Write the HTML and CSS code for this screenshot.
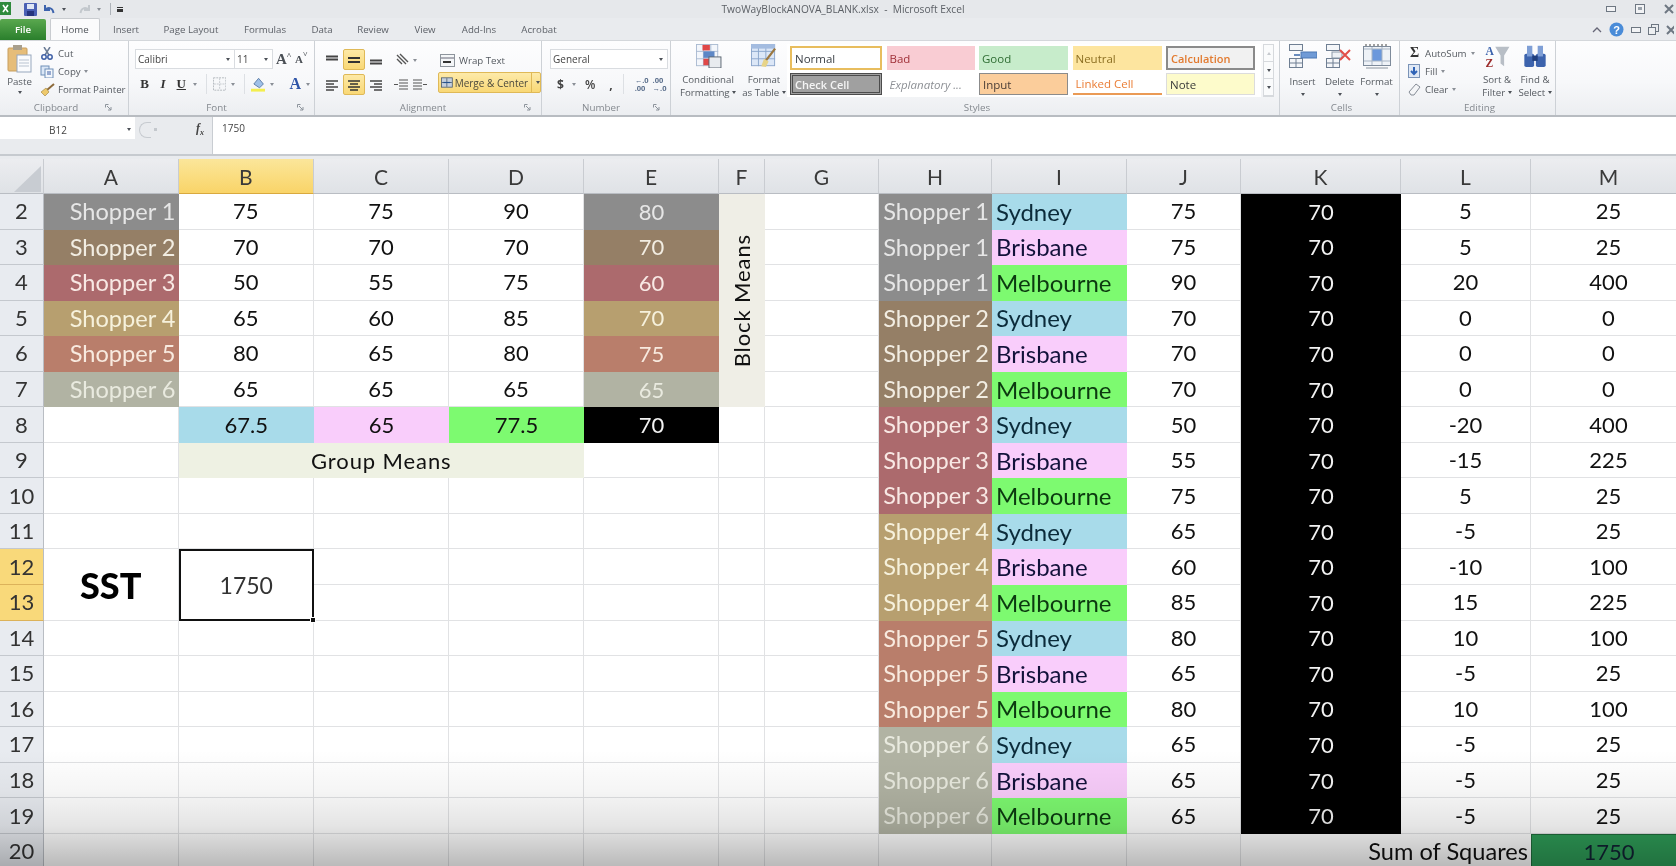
FILE: index.html
```html
<!DOCTYPE html>
<html lang="en">
<head>
<meta charset="utf-8">
<title>TwoWayBlockANOVA_BLANK.xlsx - Microsoft Excel</title>
<link rel="stylesheet" href="styles.css">
</head>
<body>
<div class="app">
  <header class="titlebar">
    <div class="qat">
      <svg class="ic" width="12" height="14" viewBox="0 0 12 14"><rect width="11" height="13" y="0" fill="#2f8a3c"/><path d="M3 3l5 7M8 3l-5 7" stroke="#fff" stroke-width="1.6"/></svg>
      <svg class="ic save" width="13" height="13" viewBox="0 0 13 13"><rect width="13" height="13" rx="1" fill="#4a60b4"/><rect x="3" y="1" width="7" height="5" fill="#dfe6f5"/><rect x="3" y="8" width="7" height="5" fill="#26357e"/></svg>
      <svg class="ic" width="13" height="13" viewBox="0 0 13 13"><path d="M2 2v5h5M2.5 7c2-3 7-3 8 3" fill="none" stroke="#3c63ad" stroke-width="2"/></svg>
      <span class="tiny-arrow dark"></span>
      <svg class="ic redo" width="13" height="13" viewBox="0 0 13 13"><path d="M11 2v5H6M10.500 7c-2-3-7-3-8 3" fill="none" stroke="#c3c8cd" stroke-width="2"/></svg>
      <span class="tiny-arrow"></span>
      <span class="qat-sep"></span>
      <span class="qat-more"></span>
    </div>
    <div class="doc-title">TwoWayBlockANOVA_BLANK.xlsx  -  Microsoft Excel</div>
    <div class="winctl">
      <svg width="10" height="6" viewBox="0 0 10 6"><rect x=".5" y=".5" width="9" height="5" fill="#f2f3f5" stroke="#6e7782"/></svg>
      <svg width="10" height="10" viewBox="0 0 10 10"><rect x=".5" y=".5" width="9" height="9" fill="#f2f3f5" stroke="#6e7782"/><rect x="3" y="3" width="4" height="3" fill="#9aa2ab"/></svg>
      <svg width="10" height="10" viewBox="0 0 10 10"><path d="M1 1l8 8M9 1l-8 8" stroke="#6e7782" stroke-width="2"/></svg>
    </div>
  </header>

  <nav class="tabs">
    <div class="tab-file">File</div>
    <div class="tab tab-home">Home</div>
    <div class="tab w-insert">Insert</div>
    <div class="tab w-layout">Page Layout</div>
    <div class="tab w-formulas">Formulas</div>
    <div class="tab w-data">Data</div>
    <div class="tab w-review">Review</div>
    <div class="tab w-view">View</div>
    <div class="tab w-addins">Add-Ins</div>
    <div class="tab w-acrobat">Acrobat</div>
    <div class="tab-tools">
      <svg width="10" height="8" viewBox="0 0 10 8"><path d="M1 6l4-4 4 4" fill="none" stroke="#667" stroke-width="1.300"/></svg>
      <svg width="15" height="15" viewBox="0 0 15 15"><circle cx="7.500" cy="7.500" r="7" fill="#4a8cd8"/><text x="7.500" y="11.500" text-anchor="middle" class="help">?</text></svg>
      <svg width="10" height="6" viewBox="0 0 10 6"><rect x=".5" y=".5" width="9" height="5" fill="#f2f3f5" stroke="#6e7782"/></svg>
      <svg width="11" height="11" viewBox="0 0 11 11"><rect x="3.500" y=".5" width="7" height="7" fill="none" stroke="#6e7782"/><rect x=".5" y="3.500" width="7" height="7" fill="#eef0f2" stroke="#6e7782"/></svg>
      <svg width="8" height="10" viewBox="0 0 8 10"><path d="M1 1l8 8M9 1l-8 8" stroke="#6e7782" stroke-width="2"/></svg>
    </div>
  </nav>

  <section class="ribbon">
    <div class="group g-clip">
      <div class="body clip-body">
        <div class="big paste">
          <svg width="25" height="28" viewBox="0 0 25 28"><rect x="1" y="3" width="19" height="23" rx="1" fill="#e6bd79" stroke="#c79e5f"/><rect x="6" y="0" width="9" height="5" fill="#a89f8d"/><rect x="10" y="10" width="14" height="17" fill="#fafbfd" stroke="#97a7bd"/><path d="M12 15h10M12 18h10M12 21h10" stroke="#b9c3d0"/></svg>
          <span>Paste</span><span class="tiny-arrow dark"></span>
        </div>
        <div class="small-stack">
          <div class="small"><svg width="12" height="13" viewBox="0 0 12 13"><path d="M3 0l5 8M9 0L4 8" stroke="#6b7c96" stroke-width="1.500"/><circle cx="3" cy="10" r="2.200" fill="none" stroke="#3d5ea5" stroke-width="1.500"/><circle cx="9" cy="10" r="2.200" fill="none" stroke="#3d5ea5" stroke-width="1.500"/></svg><span>Cut</span></div>
          <div class="small"><svg width="14" height="13" viewBox="0 0 14 13"><rect x="1" y="1" width="8" height="9" fill="#dbe7f6" stroke="#6f8fb8"/><rect x="5" y="4" width="8" height="9" fill="#f3f7fc" stroke="#6f8fb8"/><path d="M7 7h4M7 9h4" stroke="#3d5ea5"/></svg><span>Copy</span><span class="tiny-arrow"></span></div>
          <div class="small"><svg width="16" height="13" viewBox="0 0 16 13"><path d="M15 1L8 7" stroke="#8d6a3a" stroke-width="2"/><path d="M2 9l5-4 3 4-4 4z" fill="#eec96b" stroke="#9a7d3c" stroke-width=".6"/></svg><span>Format Painter</span></div>
        </div>
      </div>
      <div class="label"><i></i><span>Clipboard</span><svg class="launch" width="7" height="7" viewBox="0 0 7 7"><path d="M.5 .5h3M.5 .5v3M2 2l4 4M6 3v3H3" fill="none" stroke="#8d949c"/></svg></div>
    </div>

    <div class="group g-font">
      <div class="body col">
        <div class="combo-row">
          <div class="combo font-name"><span>Calibri</span><span class="tiny-arrow dark"></span></div>
          <div class="combo font-size"><span>11</span><span class="tiny-arrow dark"></span></div>
          <span class="grow">A<sup>˄</sup></span><span class="grow shrink">A<sup>˅</sup></span>
        </div>
        <div class="tool-row font-tools">
          <b class="bt serif">B</b><i class="bt serif">I</i><u class="bt serif">U</u><span class="tiny-arrow"></span>
          <span class="vsep"></span>
          <svg width="14" height="14" viewBox="0 0 14 14"><rect x=".5" y=".5" width="13" height="13" fill="none" stroke="#b2b7bd" stroke-dasharray="2 1"/><path d="M7 1v12M1 7h12" stroke="#c3c7cc" stroke-dasharray="2 1"/></svg><span class="tiny-arrow"></span>
          <span class="vsep"></span>
          <svg width="15" height="16" viewBox="0 0 15 16"><path d="M3 8l5-6 5 6-4 4z" fill="#9fc0e8" stroke="#5e7ea8"/><rect y="13" width="15" height="3" fill="#f3ee4f"/></svg><span class="tiny-arrow"></span>
          <span class="font-a">A</span><span class="tiny-arrow"></span>
        </div>
      </div>
      <div class="label"><i></i><span>Font</span><svg class="launch" width="7" height="7" viewBox="0 0 7 7"><path d="M.5 .5h3M.5 .5v3M2 2l4 4M6 3v3H3" fill="none" stroke="#8d949c"/></svg></div>
    </div>

    <div class="group g-align">
      <div class="body align-body">
        <div class="align-grid">
          <span class="abtn"><svg width="14" height="10" viewBox="0 0 14 10"><path d="M1 1.500h12M1 4.500h12" stroke="#444" stroke-width="2"/></svg></span>
          <span class="abtn on"><svg width="14" height="10" viewBox="0 0 14 10"><path d="M1 3h12M1 7h12" stroke="#333" stroke-width="2"/></svg></span>
          <span class="abtn"><svg width="14" height="10" viewBox="0 0 14 10"><path d="M1 5.500h12M1 8.500h12" stroke="#444" stroke-width="2"/></svg></span>
          <span class="abtn"><svg width="14" height="12" viewBox="0 0 14 12"><path d="M1 2h12M1 5h8M1 8h12M1 11h8" stroke="#444" stroke-width="1.500"/></svg></span>
          <span class="abtn on"><svg width="14" height="12" viewBox="0 0 14 12"><path d="M1 2h12M3 5h8M1 8h12M3 11h8" stroke="#333" stroke-width="1.500"/></svg></span>
          <span class="abtn"><svg width="14" height="12" viewBox="0 0 14 12"><path d="M1 2h12M5 5h8M1 8h12M5 11h8" stroke="#444" stroke-width="1.500"/></svg></span>
        </div>
        <div class="orient">
          <div class="orient-top"><svg width="15" height="14" viewBox="0 0 15 14"><path d="M2 2l9 9M5 1l8 8M2 6l5 5" stroke="#555" stroke-width="1.400"/></svg><span class="tiny-arrow"></span></div>
          <div class="orient-bot">
            <svg width="14" height="13" viewBox="0 0 14 13"><path d="M5 1h9M5 4h9M5 7h9M5 10h9M0 5.500h4" stroke="#555" stroke-width="1.200"/></svg>
            <svg width="14" height="13" viewBox="0 0 14 13"><path d="M0 1h9M0 4h9M0 7h9M0 10h9M10 5.500h4" stroke="#555" stroke-width="1.200"/></svg>
          </div>
        </div>
        <div class="wrapcol">
          <div class="wrap"><svg width="17" height="15" viewBox="0 0 17 15"><rect x=".5" y="1.500" width="14" height="12" fill="#f4f6f8" stroke="#8d949c"/><path d="M1 5h13" stroke="#667"/><path d="M3 9h8" stroke="#333" stroke-width="2"/></svg><span>Wrap Text</span></div>
          <div class="merge"><svg width="15" height="13" viewBox="0 0 15 13"><rect x=".5" y=".5" width="14" height="12" fill="#c4cfdd" stroke="#44566c"/><path d="M7.500 1v11M1 6.500h13" stroke="#44566c"/><path d="M3 6.500h9" stroke="#24528f" stroke-width="1.500"/></svg><span>Merge &amp; Center</span><em></em><span class="tiny-arrow dark"></span></div>
        </div>
      </div>
      <div class="label"><i></i><span>Alignment</span><svg class="launch" width="7" height="7" viewBox="0 0 7 7"><path d="M.5 .5h3M.5 .5v3M2 2l4 4M6 3v3H3" fill="none" stroke="#8d949c"/></svg></div>
    </div>

    <div class="group g-num">
      <div class="body col num-body">
        <div class="combo num-name"><span>General</span><span class="tiny-arrow dark"></span></div>
        <div class="tool-row num-tools">
          <b>$</b><span class="tiny-arrow"></span><span class="pct">%</span><b class="comma">,</b>
          <span class="vsep"></span>
          <span class="dec">←.0<br>.00</span><span class="dec">.00<br>→.0</span>
        </div>
      </div>
      <div class="label"><i></i><span>Number</span><svg class="launch" width="7" height="7" viewBox="0 0 7 7"><path d="M.5 .5h3M.5 .5v3M2 2l4 4M6 3v3H3" fill="none" stroke="#8d949c"/></svg></div>
    </div>

    <div class="group g-styles">
      <div class="body styles-body">
        <div class="big cf">
          <svg width="27" height="26" viewBox="0 0 27 26"><rect x=".5" y=".5" width="23" height="23" fill="#f3f6fb" stroke="#a9bad1"/><path d="M8 0v24M16 0v24M0 8h24M0 16h24" stroke="#a9bad1"/><rect x="7" y="1" width="8" height="6" fill="#e04848"/><rect x="8" y="8" width="12" height="7" fill="#5d87c6"/><rect x="8" y="16" width="7" height="7" fill="#e04848"/><rect x="14" y="14" width="13" height="12" fill="#e8ebef" stroke="#55606d"/></svg>
          <span>Conditional<br>Formatting <a class="tiny-arrow dark"></a></span>
        </div>
        <div class="big ft">
          <svg width="28" height="26" viewBox="0 0 28 26"><rect x=".5" y=".5" width="25" height="23" fill="#dce7f7" stroke="#8aa5cb"/><path d="M8 0v24M16 0v24M0 8h26M0 16h26" stroke="#8aa5cb"/><rect y="0" width="26" height="5" fill="#a4bce0"/><path d="M26 5L16 18" stroke="#9c7840" stroke-width="2.500"/><path d="M11 24l3-8 5 3-3 6z" fill="#e7d489"/></svg>
          <span>Format<br>as Table <a class="tiny-arrow dark"></a></span>
        </div>
        <div class="gallery">
          <div class="st st-normal">Normal</div><div class="st st-bad">Bad</div><div class="st st-good">Good</div><div class="st st-neutral">Neutral</div><div class="st st-calc">Calculation</div>
          <div class="st st-check"><span>Check Cell</span></div><div class="st st-expl">Explanatory ...</div><div class="st st-input">Input</div><div class="st st-linked">Linked Cell</div><div class="st st-note">Note</div>
        </div>
        <div class="gal-scroll"><span><i class="up"></i></span><span><i class="tiny-arrow dark"></i></span><span><i class="tiny-arrow dark"></i></span></div>
      </div>
      <div class="label"><i></i><span>Styles</span><i></i></div>
    </div>

    <div class="group g-cells">
      <div class="body cells-body">
        <div class="big cellbtn">
          <svg width="28" height="24" viewBox="0 0 28 24"><rect x=".5" y=".5" width="13" height="6" fill="#f4f6f9" stroke="#6f7f93"/><rect x=".5" y="14.500" width="13" height="9" fill="#f4f6f9" stroke="#6f7f93"/><path d="M7 15v9M1 19h13" stroke="#6f7f93"/><rect x="12" y="8" width="16" height="6" fill="#6f9ad6" stroke="#4d78b4"/><path d="M5 11h6" stroke="#3a68a8" stroke-width="1.500"/></svg>
          <span>Insert</span><span class="tiny-arrow dark"></span>
        </div>
        <div class="big cellbtn">
          <svg width="28" height="24" viewBox="0 0 28 24"><rect x=".5" y=".5" width="13" height="6" fill="#f4f6f9" stroke="#6f7f93"/><rect x=".5" y="14.500" width="13" height="9" fill="#f4f6f9" stroke="#6f7f93"/><path d="M7 15v9M1 19h13" stroke="#6f7f93"/><rect x="6" y="8" width="10" height="6" fill="#eef1f5" stroke="#8b98a8"/><path d="M14 6l10 10M24 6L14 16" stroke="#e2504a" stroke-width="2"/></svg>
          <span>Delete</span><span class="tiny-arrow dark"></span>
        </div>
        <div class="big cellbtn">
          <svg width="28" height="26" viewBox="0 0 28 26"><rect x=".5" y="2.500" width="27" height="19" fill="#eef2f7" stroke="#7e8b9b"/><rect x="9" y="5" width="10" height="12" fill="#6b98dc"/><path d="M9 3v18M19 3v18M1 17h26M1 5h26" stroke="#a8b5c5"/><path d="M3 24h22" stroke="#8a949f"/><path d="M2 1h24" stroke="#444" stroke-dasharray="2 2"/></svg>
          <span class="fmt-label">Format</span><span class="tiny-arrow dark"></span>
        </div>
      </div>
      <div class="label"><i></i><span>Cells</span><i></i></div>
    </div>

    <div class="group g-edit">
      <div class="body edit-body">
        <div class="small-stack edit-stack">
          <div class="small"><span class="sigma">Σ</span><span>AutoSum</span><span class="tiny-arrow"></span></div>
          <div class="small"><svg class="eic" width="13" height="14" viewBox="0 0 13 14"><rect x=".5" y=".5" width="11" height="13" fill="#dfe8f5" stroke="#7a93b7"/><path d="M6 3v6M3 7l3 3 3-3" fill="none" stroke="#2f63b7" stroke-width="2"/></svg><span>Fill</span><span class="tiny-arrow"></span></div>
          <div class="small"><svg class="eic" width="13" height="13" viewBox="0 0 13 13"><path d="M1 9l7-8 4 3-6 8H3z" fill="#f4f5f7" stroke="#858c96"/></svg><span>Clear</span><span class="tiny-arrow"></span></div>
        </div>
        <div class="big sortbtn">
          <svg width="28" height="27" viewBox="0 0 28 27"><path d="M12 3h16l-6 10v12l-4-3V13z" fill="#b8bec6"/><text x="1" y="12" class="az az-a">A</text><text x="1" y="26" class="az az-z">Z</text></svg>
          <span>Sort &amp;<br>Filter <a class="tiny-arrow dark"></a></span>
        </div>
        <div class="big sortbtn">
          <svg width="26" height="27" viewBox="0 0 26 27"><rect x="1" y="11" width="11" height="15" rx="2" fill="#3c63ad"/><rect x="14" y="11" width="11" height="15" rx="2" fill="#3c63ad"/><rect x="4" y="2" width="6" height="12" fill="#7f9fd6"/><rect x="16" y="2" width="6" height="12" fill="#7f9fd6"/><rect x="10" y="13" width="6" height="6" fill="#203f7d"/></svg>
          <span>Find &amp;<br>Select <a class="tiny-arrow dark"></a></span>
        </div>
      </div>
      <div class="label"><i></i><span>Editing</span><i></i></div>
    </div>
  </section>

  <section class="fbar">
    <div class="fbar-left">
      <div class="name-row">
        <div class="namebox"><span>B12</span><span class="tiny-arrow dark"></span></div>
        <div class="fbar-dots"><span></span><i></i></div>
        <div class="fx">f<sub>x</sub></div>
      </div>
    </div>
    <div class="fbar-input">1750</div>
  </section>

  <main class="sheet">
    <div class="h corner"><svg width="28" height="26" viewBox="0 0 28 26"><path d="M27 0v26H0z" fill="#c8ccd2"/></svg></div>
    <div class="h">A</div><div class="h sel">B</div><div class="h">C</div><div class="h">D</div><div class="h">E</div><div class="h">F</div><div class="h">G</div><div class="h">H</div><div class="h">I</div><div class="h">J</div><div class="h">K</div><div class="h">L</div><div class="h">M</div>

    <div class="r">2</div><div class="c sh s1">Shopper 1</div><div class="c">75</div><div class="c">75</div><div class="c">90</div><div class="c s1">80</div><div class="c block"><span>Block Means</span></div><div class="c"></div><div class="c sh s1">Shopper 1</div><div class="c city blue">Sydney</div><div class="c">75</div><div class="c k">70</div><div class="c">5</div><div class="c">25</div>
    <div class="r">3</div><div class="c sh s2">Shopper 2</div><div class="c">70</div><div class="c">70</div><div class="c">70</div><div class="c s2">70</div><div class="c"></div><div class="c sh s1">Shopper 1</div><div class="c city pink">Brisbane</div><div class="c">75</div><div class="c k">70</div><div class="c">5</div><div class="c">25</div>
    <div class="r">4</div><div class="c sh s3">Shopper 3</div><div class="c">50</div><div class="c">55</div><div class="c">75</div><div class="c s3">60</div><div class="c"></div><div class="c sh s1">Shopper 1</div><div class="c city green">Melbourne</div><div class="c">90</div><div class="c k">70</div><div class="c">20</div><div class="c">400</div>
    <div class="r">5</div><div class="c sh s4">Shopper 4</div><div class="c">65</div><div class="c">60</div><div class="c">85</div><div class="c s4">70</div><div class="c"></div><div class="c sh s2">Shopper 2</div><div class="c city blue">Sydney</div><div class="c">70</div><div class="c k">70</div><div class="c">0</div><div class="c">0</div>
    <div class="r">6</div><div class="c sh s5">Shopper 5</div><div class="c">80</div><div class="c">65</div><div class="c">80</div><div class="c s5">75</div><div class="c"></div><div class="c sh s2">Shopper 2</div><div class="c city pink">Brisbane</div><div class="c">70</div><div class="c k">70</div><div class="c">0</div><div class="c">0</div>
    <div class="r">7</div><div class="c sh s6">Shopper 6</div><div class="c">65</div><div class="c">65</div><div class="c">65</div><div class="c s6">65</div><div class="c"></div><div class="c sh s2">Shopper 2</div><div class="c city green">Melbourne</div><div class="c">70</div><div class="c k">70</div><div class="c">0</div><div class="c">0</div>
    <div class="r">8</div><div class="c"></div><div class="c blue">67.5</div><div class="c pink">65</div><div class="c green">77.5</div><div class="c k">70</div><div class="c"></div><div class="c"></div><div class="c sh s3">Shopper 3</div><div class="c city blue">Sydney</div><div class="c">50</div><div class="c k">70</div><div class="c">-20</div><div class="c">400</div>
    <div class="r">9</div><div class="c"></div><div class="c gm">Group Means</div><div class="c"></div><div class="c"></div><div class="c"></div><div class="c sh s3">Shopper 3</div><div class="c city pink">Brisbane</div><div class="c">55</div><div class="c k">70</div><div class="c">-15</div><div class="c">225</div>
    <div class="r">10</div><div class="c"></div><div class="c"></div><div class="c"></div><div class="c"></div><div class="c"></div><div class="c"></div><div class="c"></div><div class="c sh s3">Shopper 3</div><div class="c city green">Melbourne</div><div class="c">75</div><div class="c k">70</div><div class="c">5</div><div class="c">25</div>
    <div class="r">11</div><div class="c"></div><div class="c"></div><div class="c"></div><div class="c"></div><div class="c"></div><div class="c"></div><div class="c"></div><div class="c sh s4">Shopper 4</div><div class="c city blue">Sydney</div><div class="c">65</div><div class="c k">70</div><div class="c">-5</div><div class="c">25</div>
    <div class="r rsel">12</div><div class="c sst">SST</div><div class="c total">1750<i class="handle"></i></div><div class="c"></div><div class="c"></div><div class="c"></div><div class="c"></div><div class="c"></div><div class="c sh s4">Shopper 4</div><div class="c city pink">Brisbane</div><div class="c">60</div><div class="c k">70</div><div class="c">-10</div><div class="c">100</div>
    <div class="r rsel">13</div><div class="c"></div><div class="c"></div><div class="c"></div><div class="c"></div><div class="c"></div><div class="c sh s4">Shopper 4</div><div class="c city green">Melbourne</div><div class="c">85</div><div class="c k">70</div><div class="c">15</div><div class="c">225</div>
    <div class="r">14</div><div class="c"></div><div class="c"></div><div class="c"></div><div class="c"></div><div class="c"></div><div class="c"></div><div class="c"></div><div class="c sh s5">Shopper 5</div><div class="c city blue">Sydney</div><div class="c">80</div><div class="c k">70</div><div class="c">10</div><div class="c">100</div>
    <div class="r">15</div><div class="c"></div><div class="c"></div><div class="c"></div><div class="c"></div><div class="c"></div><div class="c"></div><div class="c"></div><div class="c sh s5">Shopper 5</div><div class="c city pink">Brisbane</div><div class="c">65</div><div class="c k">70</div><div class="c">-5</div><div class="c">25</div>
    <div class="r">16</div><div class="c"></div><div class="c"></div><div class="c"></div><div class="c"></div><div class="c"></div><div class="c"></div><div class="c"></div><div class="c sh s5">Shopper 5</div><div class="c city green">Melbourne</div><div class="c">80</div><div class="c k">70</div><div class="c">10</div><div class="c">100</div>
    <div class="r">17</div><div class="c"></div><div class="c"></div><div class="c"></div><div class="c"></div><div class="c"></div><div class="c"></div><div class="c"></div><div class="c sh s6">Shopper 6</div><div class="c city blue">Sydney</div><div class="c">65</div><div class="c k">70</div><div class="c">-5</div><div class="c">25</div>
    <div class="r">18</div><div class="c"></div><div class="c"></div><div class="c"></div><div class="c"></div><div class="c"></div><div class="c"></div><div class="c"></div><div class="c sh s6">Shopper 6</div><div class="c city pink">Brisbane</div><div class="c">65</div><div class="c k">70</div><div class="c">-5</div><div class="c">25</div>
    <div class="r">19</div><div class="c"></div><div class="c"></div><div class="c"></div><div class="c"></div><div class="c"></div><div class="c"></div><div class="c"></div><div class="c sh s6">Shopper 6</div><div class="c city green">Melbourne</div><div class="c">65</div><div class="c k">70</div><div class="c">-5</div><div class="c">25</div>
    <div class="r">20</div><div class="c"></div><div class="c"></div><div class="c"></div><div class="c"></div><div class="c"></div><div class="c"></div><div class="c"></div><div class="c"></div><div class="c"></div><div class="c"></div><div class="c sumlabel">Sum of Squares</div><div class="c sum">1750</div>
  </main>
  <div class="video-shade"></div>
</div>
</body>
</html>
```

FILE: styles.css
```css
* { box-sizing: border-box; }
html, body { margin: 0; height: 100%; overflow: hidden; }
body { background: #fff; font-family: "Open Sans", "Liberation Sans", sans-serif; color: #444; }
.app { position: relative; width: 1676px; height: 866px; overflow: hidden; display: flex; flex-direction: column; filter: blur(.45px); background: #e9ebee; }

/* shared bits */
.tiny-arrow { display: inline-block; width: 0; height: 0; border-left: 2.500px solid transparent; border-right: 2.500px solid transparent; border-top: 3px solid #8a8f96; vertical-align: middle; flex: none; }
.tiny-arrow.dark { border-top-color: #4d5158; }
.vsep { width: 1px; height: 20px; background: #dde0e4; flex: none; }

/* title bar */
.titlebar { height: 18px; display: grid; grid-template-columns: 1fr auto 1fr; align-items: center; background: #e6e8eb; flex: none; }
.qat { display: flex; align-items: center; gap: 6px; overflow: hidden; }
.qat .save { margin-left: 6px; }
.qat .redo { margin-left: 6px; }
.qat-sep { width: 1px; height: 12px; background: #aeb3b9; margin-left: 3px; }
.qat-more { width: 6px; height: 5px; border-top: 1px solid #333; border-bottom: 3px solid #333; }
.doc-title { font-size: 10.200px; color: #5c6066; white-space: pre; padding-left: 10px; }
.winctl { display: flex; justify-content: flex-end; align-items: center; gap: 19px; padding-right: 2px; }

/* tabs */
.tabs { height: 22px; display: flex; align-items: flex-end; background: #e9ebee; flex: none; font-size: 9.700px; }
.tab-file { width: 46px; height: 21px; background: linear-gradient(#5aa84f, #2a7f2c); color: #fff; font-weight: 600; display: flex; align-items: center; justify-content: center; border-radius: 2px 2px 0 0; }
.tab { height: 21px; display: flex; align-items: center; justify-content: center; color: #5d6168; flex: none; }
.tab-home { width: 50px; margin-left: 4px; background: #fbfbfc; border: 1px solid #c9ccd0; border-bottom: none; color: #50545a; border-radius: 2px 2px 0 0; height: 22px; }
.w-insert { width: 52px; }
.w-layout { width: 78px; }
.w-formulas { width: 70px; }
.w-data { width: 44px; }
.w-review { width: 58px; }
.w-view { width: 46px; }
.w-addins { width: 62px; }
.w-acrobat { width: 58px; }
.tab-tools { margin-left: auto; height: 21px; display: flex; align-items: center; gap: 7px; overflow: hidden; width: 84px; }

/* ribbon */
.ribbon { height: 75px; display: flex; flex: none; background: linear-gradient(#fdfdfe 0, #f7f8fa 55%, #eceef1 100%); font-size: 9.700px; color: #555a60; border-top: 1px solid #d4d7db; }
.group { display: flex; flex-direction: column; border-right: 1px solid #cdd1d6; flex: none; }
.body { flex: 1; display: flex; min-height: 0; }
.col { flex-direction: column; }
.label { height: 16px; display: grid; grid-template-columns: 1fr auto 1fr; align-items: center; font-size: 9.800px; color: #84898f; flex: none; padding-right: 4px; }
.launch { justify-self: end; }
.g-clip { width: 129px; } .g-font { width: 186px; } .g-align { width: 227px; } .g-num { width: 129px; } .g-styles { width: 609px; } .g-cells { width: 120px; } .g-edit { width: 156px; }
.g-clip .label { padding-right: 16px; }
.g-font .label, .g-align .label, .g-num .label { padding-right: 10px; }
.g-styles .label, .g-cells .label, .g-edit .label { padding-left: 8px; }

.big { display: flex; flex-direction: column; align-items: center; line-height: 12.500px; text-align: center; flex: none; }
.big a { display: inline-block; }
.clip-body { padding: 3px 0 0 6px; gap: 6px; }
.paste { width: 27px; gap: 2px; padding-top: 1px; }
.paste svg { margin-bottom: 1px; }
.small-stack { display: flex; flex-direction: column; gap: 0; }
.small { height: 19.500px; display: flex; align-items: center; gap: 3px; white-space: nowrap; }
.small svg { width: 16px; flex: none; }

/* font group */
.g-font .col { padding: 8px 0 0 6px; }
.combo-row { display: flex; align-items: center; height: 20px; }
.combo { height: 20px; background: #fff; border: 1px solid #d9dce0; display: flex; align-items: center; justify-content: space-between; padding: 0 4px 0 2px; color: #444; font-size: 10px; }
.font-name { width: 100px; }
.font-size { width: 38px; border-left: none; }
.grow { font: 700 15px "Liberation Serif", serif; color: #4a4f55; margin-left: 3px; width: 16px; }
.grow sup { font-size: 8px; vertical-align: 6px; line-height: 0; }
.shrink { font-size: 11px; margin-left: 3px; }
.tool-row { display: flex; align-items: center; height: 22px; }
.font-tools { margin-top: 4px; padding-left: 3px; gap: 5px; }
.bt { width: 14px; text-align: center; font-size: 13px; color: #333; }
.serif { font-family: "Liberation Serif", serif; font-weight: 700; }
.font-tools .tiny-arrow { margin-right: 4px; }
.font-tools svg { margin-left: 1px; }
.font-a { font: 700 16px "Liberation Serif", serif; color: #2f55a8; margin-left: 6px; }

/* alignment */
.align-body { padding: 8px 0 0 6px; }
.align-grid { display: grid; grid-template-columns: repeat(3, 22px); grid-auto-rows: 22px; row-gap: 3px; width: 66px; }
.abtn { display: flex; align-items: center; justify-content: center; border-radius: 2px; height: 21px; }
.abtn.on { background: linear-gradient(#fde9a6, #f9d876); border: 1px solid #dfb957; }
.orient { width: 46px; margin-left: 7px; }
.orient-top { height: 22px; display: flex; align-items: center; gap: 3px; padding-left: 1px; }
.orient-bot { margin-top: 3px; height: 22px; display: flex; align-items: center; gap: 5px; }
.wrapcol { margin-left: 11px; width: 105px; }
.wrap { height: 22px; display: flex; align-items: center; gap: 2px; padding-left: 2px; white-space: nowrap; }
.merge { margin-top: 1px; height: 21px; display: flex; align-items: center; gap: 2px; background: linear-gradient(#fdeaa9, #f9d876); border: 1px solid #dfb957; border-radius: 2px; padding-left: 2px; white-space: nowrap; color: #4c4a3d; font-size: 10px; width: 103px; }
.merge em { width: 1px; height: 19px; background: #dfb957; margin-left: 1px; }
.merge .tiny-arrow { margin-left: 2px; }

/* number */
.num-body { padding: 8px 0 0 8px; }
.num-name { width: 118px; }
.num-tools { margin-top: 4px; padding-left: 7px; color: #444; }
.num-tools b { font-size: 12px; }
.num-tools .tiny-arrow { margin-left: 8px; }
.pct { margin-left: 9px; font-size: 12px; font-weight: 600; }
.comma { margin-left: 14px; }
.num-tools .vsep { margin: 0 11px 0 10px; }
.dec { font-size: 7.500px; line-height: 8px; font-weight: 700; color: #5b6f8c; width: 18px; margin-right: 4px; white-space: nowrap; }

/* styles */
.styles-body { padding: 3px 0 0 4px; }
.cf { width: 66px; gap: 6px; }
.ft { width: 46px; gap: 6px; white-space: nowrap; }
.gallery { width: 474px; height: 53px; background: #fff; display: grid; grid-template-columns: 92px 88px 89px 89px 89px; grid-template-rows: 24px 22px; column-gap: 4.500px; row-gap: 3px; padding: 2px 0 0 3px; align-content: start; font-size: 11.500px; }
.st { display: flex; align-items: center; padding-left: 3px; white-space: nowrap; }
.st-normal { background: #fff; border: 2px solid #e8bd5e; color: #3a3f45; }
.st-bad { background: #f9ccd3; color: #a03038; }
.st-good { background: #c7eccb; color: #2f6d33; }
.st-neutral { background: #fde59f; color: #8c6f22; }
.st-calc { background: #f1f1f1; border: 2px solid #8a8a8a; color: #e27a2f; font-weight: 600; font-size: 11px; }
.st-check { background: #a0a0a0; border: 3px double #4c4c4c; color: #f4f4f4; font-weight: 600; font-size: 11px; padding-left: 2px; }
.st-expl { color: #8d9095; font-style: italic; }
.st-input { background: #fbcd9b; border: 1px solid #8b8b8b; color: #4a3d36; }
.st-linked { color: #ea7d35; border-bottom: 2px solid #ea9a55; }
.st-note { background: #fdfbcb; border: 1px solid #dcdcdc; color: #3a3a3a; }
.gal-scroll { width: 11px; height: 53px; margin-left: 2px; display: grid; grid-template-rows: repeat(3, 1fr); border: 1px solid #d6d9dd; background: #fafbfc; }
.gal-scroll span { display: flex; align-items: center; justify-content: center; border-bottom: 1px solid #d6d9dd; }
.gal-scroll .up { width: 0; height: 0; border-left: 2.500px solid transparent; border-right: 2.500px solid transparent; border-bottom: 3px solid #c5c9ce; }

/* cells */
.cells-body { padding: 3px 0 0 7px; gap: 6px; }
.cellbtn { width: 31px; gap: 0; }
.cellbtn span:not(.tiny-arrow) { margin-top: 8px; }
.cellbtn span.fmt-label { margin-top: 6px; }
.cellbtn .tiny-arrow { margin-top: 4px; }

/* editing */
.edit-body { padding: 3px 0 0 8px; }
.edit-stack { width: 70px; }
.edit-stack .small { gap: 4px; }
.sigma { width: 13px; font: 700 14px "Liberation Serif", serif; color: #333; text-align: center; }
.edit-stack .small svg { width: 13px; }
.sortbtn { width: 38px; gap: 6px; white-space: nowrap; }
.az { font: 700 13px "Liberation Serif", serif; }
.az-a { fill: #3c63ad; }
.az-z { fill: #9c2b2b; }
.help { font: 700 11px "Liberation Sans", sans-serif; fill: #fff; }

/* formula bar */
.fbar { height: 41px; display: flex; flex: none; background: #fff; border-top: 2px solid #b8bcc1; border-bottom: 2px solid #c6cacf; }
.fbar-left { width: 213px; background: #e9ebee; border-right: 1px solid #c9cdd2; flex: none; }
.name-row { height: 22px; display: flex; align-items: center; }
.namebox { width: 135px; height: 22px; background: #fff; display: flex; align-items: center; justify-content: space-between; padding: 3px 4px 0 49px; font-size: 10px; color: #444; }
.fbar-dots { width: 44px; display: flex; align-items: center; gap: 3px; padding: 3px 0 0 4px; }
.fbar-dots span { width: 12px; height: 16px; border: 1px solid #c7cbd0; border-right: none; border-radius: 8px 0 0 8px; }
.fbar-dots i { width: 3px; height: 3px; background: #c4c8cd; }
.fx { font: italic 700 12px "Liberation Serif", serif; color: #444; margin-left: 17px; padding-top: 3px; }
.fx sub { font-size: 8px; }
.fbar-input { flex: 1; font-size: 10px; padding: 4px 0 0 9px; color: #444; }

/* sheet */
.sheet { flex: 1; min-height: 0; margin-top: 3px; display: grid; overflow: hidden; background: #fff; font: 22px/1 Lato, "Liberation Sans", sans-serif; color: #111;
  grid-template-columns: 44px 134.500px 135.500px 135px 135px 135px 46px 114px 113px 135px 114px 160px 130px 156px;
  grid-template-rows: 35px; grid-auto-rows: 35.550px; }
.h { grid-row: 1; background: linear-gradient(#ecedf0, #dfe2e6); border-right: 1px solid #c9ccd1; border-bottom: 1px solid #b9bdc3; display: flex; align-items: center; justify-content: center; color: #3a3a3a; font-size: 21px; }
.corner { align-items: flex-end; justify-content: flex-end; padding: 0 1px 1px 0; }
.h.sel { background: linear-gradient(#fbe69a, #f9d468); border-bottom-color: #d9a93e; }
.r { grid-column: 1; background: #e8ebf0; border-bottom: 1px solid #c4c8ce; border-right: 1px solid #b9bdc3; display: flex; align-items: center; justify-content: center; color: #333; }
.r.rsel { background: #f9d97a; border-bottom-color: #dcb25a; }
.c { display: flex; align-items: center; justify-content: center; border-right: 1px solid #e1e2e4; border-bottom: 1px solid #e1e2e4; white-space: nowrap; min-width: 0; }
.sh { justify-content: flex-end; padding-right: 3px; color: #f2f2ea; border: none; font-size: 23.600px; }
.s1 { background: #8c8c8c; color: #e6e6e6; border: none; }
.s2 { background: #957f66; color: #f2ede2; border: none; }
.s3 { background: #ac6a6d; color: #f8e8e4; border: none; }
.s4 { background: #b79f6f; color: #f6f1dc; border: none; }
.s5 { background: #b97e6b; color: #f8eadf; border: none; }
.s6 { background: #b1b3a3; color: #e9eadf; border: none; }
.blue { background: #a8dbea; border: none; }
.pink { background: #f9cdfb; border: none; }
.green { background: #7dfa70; border: none; }
.k { background: #000; color: #f2f2f2; border: none; }
.city { justify-content: flex-start; padding-left: 4px; color: #12123a; font-size: 24px; }
.green.city { color: #0c3a10; }
.blue.city { color: #0b2b3a; }
.block { grid-row: span 6; background: #efeee6; border: none; font-size: 22px; letter-spacing: .9px; }
.block span { writing-mode: vertical-rl; transform: rotate(180deg); }
.gm { grid-column: span 3; background: #eef1e3; border: none; font-size: 22px; letter-spacing: .9px; }
.sst { grid-row: span 2; font-size: 36px; font-weight: 900; color: #000; }
.total { grid-row: span 2; position: relative; border: 2px solid #111; font-size: 23px; color: #333; }
.handle { position: absolute; right: -4px; bottom: -4px; width: 6px; height: 6px; background: #111; border: 1px solid #fff; }
.sumlabel { justify-content: flex-end; padding-right: 3px; border: none; overflow: visible; grid-column: span 2; font-size: 23.600px; }
.sum { background: #2e9c57; color: #123; border: 1px solid #1f6b3b; }

/* the video player's darkening along the bottom edge */
.video-shade { position: absolute; left: 0; right: 0; bottom: 0; height: 116px; background: linear-gradient(rgba(0,0,0,0), rgba(0,0,0,.04) 35%, rgba(0,0,0,.1) 65%, rgba(0,0,0,.27)); pointer-events: none; }
```
